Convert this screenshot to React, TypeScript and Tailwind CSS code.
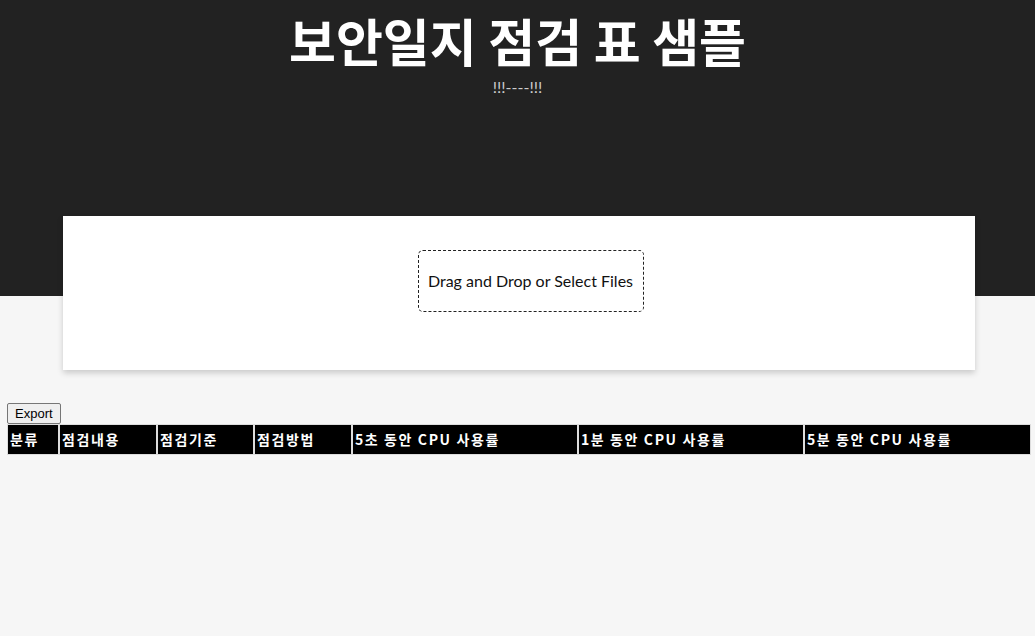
const columns = [
  { label: '분류', w: 'w-[52px]' },
  { label: '점검내용', w: 'w-[98px]' },
  { label: '점검기준', w: 'w-[97px]' },
  { label: '점검방법', w: 'w-[98px]' },
  { label: '5초 동안 CPU 사용률', w: 'w-[226px]' },
  { label: '1분 동안 CPU 사용률', w: 'w-[226px]' },
  { label: '5분 동안 CPU 사용률', w: 'w-[227px]' },
]

export default function App() {
  return (
    <div className="min-h-[636px] bg-[#f6f6f6] font-['Lato','Noto_Sans_CJK_KR',sans-serif]">
      <div className="h-[296px] bg-[#222222] flex flex-col items-center">
        <h1 className="mt-[6px] text-[51px] leading-[68px] font-bold text-white font-['Noto_Sans_CJK_KR',sans-serif]">
          보안일지 점검 표 샘플
        </h1>
        <p className="mt-[3px] text-[16px] leading-[20px] text-[#cccccc] font-['Lato',sans-serif]">!!!----!!!</p>
      </div>

      <div className="-mt-[80px] ml-[63px] w-[912px] h-[154px] bg-white shadow-[0_3px_6px_rgba(0,0,0,0.18)] flex items-start justify-center pt-[34px]">
        <div className="ml-[23px] w-[226px] h-[62px] border border-dashed border-[#222] rounded-[5px] flex items-center justify-center text-[16px] text-[#111] font-['Lato',sans-serif]">
          Drag and Drop or Select Files
        </div>
      </div>

      <div className="pt-[33px] pl-[7px]">
        <button className="block h-[21px] px-[7px] text-[13px] leading-[17px] text-black bg-[#efefef] border border-[#767676] rounded-[2px] font-['Liberation_Sans',sans-serif]">
          Export
        </button>
        <table className="w-[1024px] table-fixed border-separate border-spacing-0">
          <thead>
            <tr>
              {columns.map((c) => (
                <th
                  key={c.label}
                  className={`${c.w} h-[31px] p-0 pl-[2px] bg-black text-white text-left text-[14px] tracking-[1.6px] font-bold border border-[#dddddd] font-['Noto_Sans_CJK_KR',sans-serif]`}
                >
                  {c.label}
                </th>
              ))}
            </tr>
          </thead>
        </table>
      </div>
    </div>
  )
}
